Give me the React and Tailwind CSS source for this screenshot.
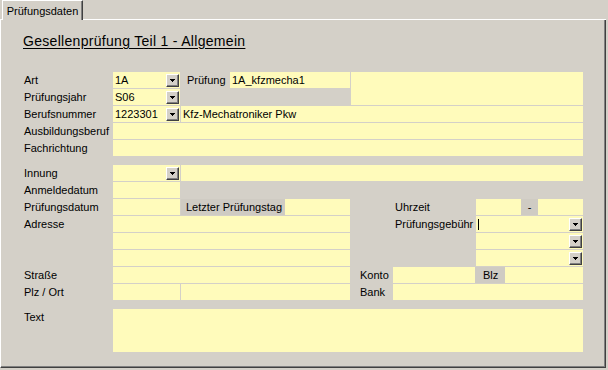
import React from 'react';

const Field = ({ className = '', children }) => (
  <div className={`h-4 shrink-0 bg-[#fffbbb] flex items-center pl-[2px] whitespace-nowrap ${className}`}>
    {children}
  </div>
);

const DropButton = () => (
  <div className="w-[13px] h-[13px] shrink-0 mr-px bg-[#d4d0c8] border border-white border-r-[#404040] border-b-[#404040] shadow-[inset_-1px_-1px_0_#808080] flex items-center justify-center">
    <svg width="5" height="3" viewBox="0 0 5 3" shapeRendering="crispEdges">
      <rect x="0" y="0" width="5" height="1" fill="#000" />
      <rect x="1" y="1" width="3" height="1" fill="#000" />
      <rect x="2" y="2" width="1" height="1" fill="#000" />
    </svg>
  </div>
);

const Combo = ({ className = '', children }) => (
  <div className={`h-4 shrink-0 bg-[#fffbbb] flex items-center justify-between pl-[2px] whitespace-nowrap ${className}`}>
    <span className="flex items-center">{children}</span>
    <DropButton />
  </div>
);

const Label = ({ className = 'w-[89px]', children }) => (
  <div className={`shrink-0 whitespace-nowrap ${className}`}>{children}</div>
);

const Row = ({ children }) => <div className="flex items-center h-4">{children}</div>;

export default function App() {
  return (
    <div className="w-[608px] h-[370px] bg-[#d4d0c8] text-black text-[11px] leading-[13px] font-['Liberation_Sans',Arial,sans-serif] overflow-hidden">
      {/* tab strip */}
      <div className="flex h-[20px]">
        <div className="w-[2px] border-b border-white" />
        <div className="w-[81px] h-[20px] border-t border-l border-white border-r border-r-[#404040] shadow-[inset_-1px_0_0_#808080] flex justify-center pt-[4px]">
          Prüfungsdaten
        </div>
        <div className="w-[523px] border-b border-white" />
      </div>

      {/* panel */}
      <div className="w-[606px] h-[348px] border-l border-white border-r border-b border-r-[#404040] border-b-[#404040] shadow-[inset_-1px_-1px_0_#808080] pl-[23px] pt-[13px]">
        <div className="-ml-px h-[16px] leading-[16px] text-[14px] tracking-[0.3px] underline underline-offset-[2px]">
          Gesellenprüfung Teil 1 - Allgemein
        </div>

        <div className="mt-[23px] flex flex-col gap-px">
          <div className="flex items-start">
            <div className="flex flex-col gap-px">
              <Row>
                <Label>Art</Label>
                <Combo className="w-[67px]">1A</Combo>
                <Label className="ml-[7px] w-[43px]">Prüfung</Label>
                <Field className="w-[120px]">1A_kfzmecha1</Field>
              </Row>
              <Row>
                <Label>Prüfungsjahr</Label>
                <Combo className="w-[67px]">S06</Combo>
              </Row>
            </div>
            <div className="ml-px w-[232px] h-[33px] bg-[#fffbbb]" />
          </div>
          <Row>
            <Label>Berufsnummer</Label>
            <Combo className="w-[67px]">1223301</Combo>
            <Field className="ml-px w-[402px]">Kfz-Mechatroniker Pkw</Field>
          </Row>
          <Row>
            <Label>Ausbildungsberuf</Label>
            <Field className="w-[470px]" />
          </Row>
          <Row>
            <Label>Fachrichtung</Label>
            <Field className="w-[470px]" />
          </Row>
        </div>

        <div className="mt-[9px] flex flex-col gap-px">
          <Row>
            <Label>Innung</Label>
            <Combo className="w-[67px]" />
            <Field className="ml-px w-[402px]" />
          </Row>
          <Row>
            <Label>Anmeldedatum</Label>
            <Field className="w-[67px]" />
          </Row>
          <Row>
            <Label>Prüfungsdatum</Label>
            <Field className="w-[67px]" />
            <div className="ml-px w-[104px] h-4 shrink-0 bg-[#cfcbc3] flex items-center pl-[5px]">Letzter Prüfungstag</div>
            <Field className="w-[65px]" />
            <Label className="ml-[45px] w-[81px]">Uhrzeit</Label>
            <Field className="w-[45px]" />
            <div className="w-[17px] h-4 shrink-0 bg-[#cfcbc3] flex items-center justify-center">-</div>
            <Field className="w-[45px]" />
          </Row>
          <Row>
            <Label>Adresse</Label>
            <Field className="w-[237px]" />
            <Label className="ml-[45px] w-[81px]">Prüfungsgebühr</Label>
            <Combo className="w-[107px]">
              <span className="w-px h-[11px] bg-black" />
            </Combo>
          </Row>
          <Row>
            <Label />
            <Field className="w-[237px]" />
            <Label className="ml-[45px] w-[81px]" />
            <Combo className="w-[107px]" />
          </Row>
          <Row>
            <Label />
            <Field className="w-[237px]" />
            <Label className="ml-[45px] w-[81px]" />
            <Combo className="w-[107px]" />
          </Row>
          <Row>
            <Label>Straße</Label>
            <Field className="w-[237px]" />
            <Label className="ml-[10px] w-[33px]">Konto</Label>
            <Field className="w-[82px]" />
            <div className="w-[30px] h-4 shrink-0 bg-[#cfcbc3] flex items-center pl-[8px]">Blz</div>
            <Field className="w-[78px]" />
          </Row>
          <Row>
            <Label>Plz / Ort</Label>
            <Field className="w-[67px]" />
            <Field className="ml-px w-[169px]" />
            <Label className="ml-[10px] w-[33px]">Bank</Label>
            <Field className="w-[190px]" />
          </Row>
        </div>

        <div className="mt-[9px] flex items-start">
          <div className="w-[89px] h-4 shrink-0 flex items-center">Text</div>
          <div className="w-[470px] h-[43px] bg-[#fffbbb]" />
        </div>
      </div>
    </div>
  );
}
